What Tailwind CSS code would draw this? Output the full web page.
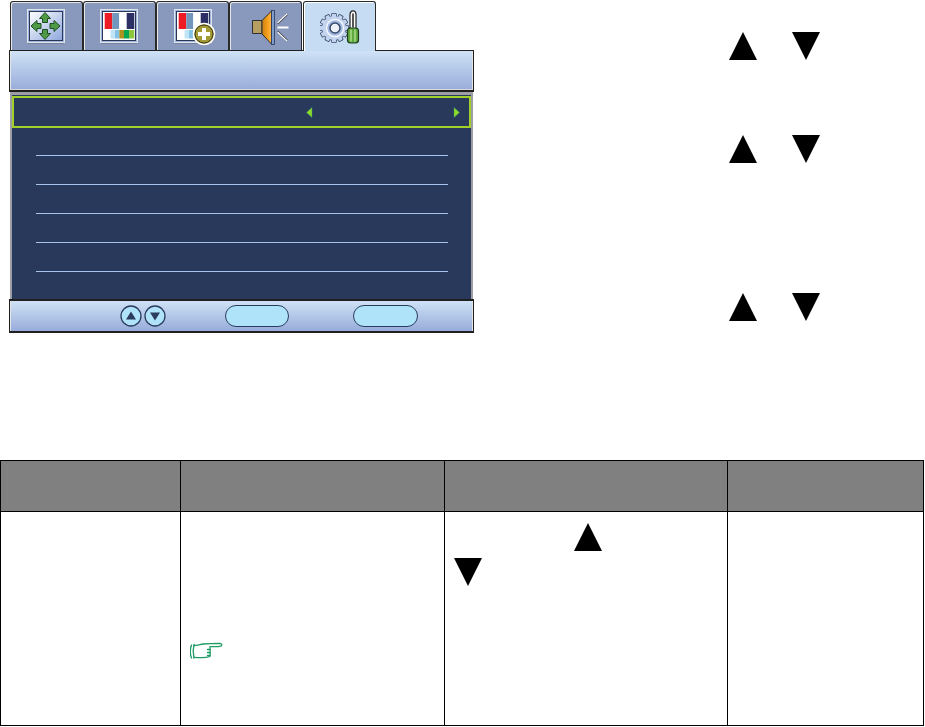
<!doctype html>
<html>
<head>
<meta charset="utf-8">
<script src="https://cdn.jsdelivr.net/npm/@tailwindcss/browser@4"></script>
</head>
<body class="bg-white">
<svg width="0" height="0" class="absolute">
  <defs>
    <linearGradient id="scr" x1="0" y1="0" x2="1" y2="1"><stop offset="0" stop-color="#ffffff"/><stop offset="1" stop-color="#8ea6dc"/></linearGradient>
    <linearGradient id="cone" x1="0" y1="0" x2="1" y2="0"><stop offset="0" stop-color="#c4821a"/><stop offset=".5" stop-color="#f39a16"/><stop offset="1" stop-color="#ffb84a"/></linearGradient>
    <rect id="toothd" x="11.300" y="3" width="5.400" height="6" rx="1" fill="#3a4a68"/>
    <rect id="toothl" x="12" y="3.800" width="4" height="6" rx=".6" fill="#c2d4f0"/>
  </defs>
</svg>
<div class="w-[925px] h-[727px] overflow-hidden flex flex-col">
  <div class="flex h-[460px]">
    <!-- OSD -->
    <div class="ml-[9px] w-[465px] h-[333px] flex flex-col">
      <div class="flex h-[50px] pt-px pl-px">
        <div class="w-[73px] h-[49px] rounded-t-[3px] border border-b-0 border-[#2a2a2a] bg-[#8899bd] shadow-[inset_1px_1px_0_#e8e8e8] pl-[16px] pt-[7px]">
          <svg width="38" height="36" viewBox="0 0 38 36">
            <rect x="0.500" y="0.500" width="37" height="33" fill="#9fb6de" stroke="#dfe3ea"/>
            <rect x="1" y="34" width="36" height="1" fill="#77829c"/>
            <rect x="2.500" y="2.500" width="33" height="29" fill="url(#scr)" stroke="#2b3555"/>
            <g fill="#4f9b45" stroke="#1d4d22" stroke-width="1" stroke-linejoin="round">
              <path d="M18 3.500l5.500 6h-3v4h-5v-4h-3z"/>
              <path d="M18 30.500l5.500-6h-3v-4h-5v4h-3z"/>
              <path d="M4 17l6-5.500v3h4v5h-4v3z"/>
              <path d="M33 17l-6-5.500v3h-4v5h4v3z"/>
            </g>
          </svg>
        </div>
        <div class="w-[73px] h-[49px] rounded-t-[3px] border border-b-0 border-[#2a2a2a] bg-[#8899bd] shadow-[inset_1px_1px_0_#e8e8e8] pl-[16px] pt-[7px]">
          <svg width="38" height="36" viewBox="0 0 38 36">
            <rect x="0.500" y="0.500" width="37" height="33" fill="#9fb6de" stroke="#dfe3ea"/>
            <rect x="1" y="34" width="36" height="1" fill="#77829c"/>
            <rect x="2.500" y="2.500" width="33" height="29" fill="#fff" stroke="#2b3555"/>
            <rect x="4.700" y="4" width="7.600" height="16" fill="#ed1c24"/>
            <rect x="12.300" y="4" width="7" height="16" fill="#7396bd"/>
            <rect x="19.300" y="4" width="7.400" height="16" fill="#fff"/>
            <rect x="26.700" y="4" width="7.600" height="16" fill="#2b2f66"/>
            <rect x="4.700" y="21" width="6" height="8.500" fill="#fff"/>
            <rect x="10.600" y="21" width="4.400" height="8.500" fill="#bfe4f5"/>
            <rect x="15" y="21" width="4.300" height="8.500" fill="#85c2e6"/>
            <rect x="19.300" y="21" width="4.700" height="8.500" fill="#ab931f"/>
            <rect x="24" y="21" width="5" height="8.500" fill="#00a651"/>
            <rect x="29" y="21" width="5.300" height="8.500" fill="#8dc63f"/>
          </svg>
        </div>
        <div class="w-[73px] h-[49px] rounded-t-[3px] border border-b-0 border-[#2a2a2a] bg-[#8899bd] shadow-[inset_1px_1px_0_#e8e8e8] pl-[17px] pt-[7px]">
          <svg width="42" height="38" viewBox="0 0 42 38">
            <rect x="0.500" y="0.500" width="37" height="33" fill="#9fb6de" stroke="#dfe3ea"/>
            <rect x="1" y="34" width="36" height="1" fill="#77829c"/>
            <rect x="2.500" y="2.500" width="33" height="29" fill="#fff" stroke="#2b3555"/>
            <rect x="4.700" y="4" width="7.600" height="16" fill="#ed1c24"/>
            <rect x="12.300" y="4" width="7" height="16" fill="#7396bd"/>
            <rect x="19.300" y="4" width="7.400" height="16" fill="#fff"/>
            <rect x="26.700" y="4" width="7.600" height="16" fill="#2b2f66"/>
            <rect x="4.700" y="21" width="6" height="8.500" fill="#fff"/>
            <rect x="10.600" y="21" width="4.400" height="8.500" fill="#bfe4f5"/>
            <rect x="15" y="21" width="4.300" height="8.500" fill="#85c2e6"/>
            <circle cx="30" cy="25" r="10.500" fill="#a39a35" stroke="#fff" stroke-width="1.500"/>
            <circle cx="30" cy="25" r="9" fill="none" stroke="#3a3a1e"/>
            <path d="M28 19h4v4h4v4h-4v4h-4v-4h-4v-4h4z" fill="#fff"/>
          </svg>
        </div>
        <div class="w-[73px] h-[49px] rounded-t-[3px] border border-b-0 border-[#2a2a2a] bg-[#8899bd] shadow-[inset_1px_1px_0_#e8e8e8] pl-[22px] pt-[8px]">
          <svg width="38" height="36" viewBox="0 0 38 36">
            <path d="M0.500 10.500h9.500v13h-9.500z" fill="#b59f63" stroke="#2f2f2f"/>
            <path d="M10 10.500l9.500-9.500v33l-9.500-10z" fill="url(#cone)" stroke="#2f2f2f"/>
            <rect x="19.500" y="0.500" width="3" height="34" fill="#7d9cc9" stroke="#2b3555" stroke-width=".8"/>
            <path d="M25.500 17.500h11" stroke="#fff" stroke-width="2"/>
            <path d="M25.500 13.500l9.500-9" stroke="#333" stroke-width="1.800"/>
            <path d="M25.500 21.500l9.500 9" stroke="#333" stroke-width="1.800"/>
            <path d="M25.500 13l9.500-9M25.500 22l9.500 9" stroke="#fff" stroke-width="1.200"/>
          </svg>
        </div>
        <div class="relative z-10 ml-px w-[73px] h-[50px] rounded-t-[3px] border border-b-0 border-[#2a2a2a] bg-[#c6dcf3] shadow-[inset_1px_1px_0_#fff] pl-[16px] pt-[8px]">
          <svg width="42" height="36" viewBox="0 0 42 36">
            <use href="#toothd"/>
            <use href="#toothd" transform="rotate(30 14 18)"/>
            <use href="#toothd" transform="rotate(60 14 18)"/>
            <use href="#toothd" transform="rotate(90 14 18)"/>
            <use href="#toothd" transform="rotate(120 14 18)"/>
            <use href="#toothd" transform="rotate(150 14 18)"/>
            <use href="#toothd" transform="rotate(180 14 18)"/>
            <use href="#toothd" transform="rotate(210 14 18)"/>
            <use href="#toothd" transform="rotate(240 14 18)"/>
            <use href="#toothd" transform="rotate(270 14 18)"/>
            <use href="#toothd" transform="rotate(300 14 18)"/>
            <use href="#toothd" transform="rotate(330 14 18)"/>
            <circle cx="14" cy="18" r="12.600" fill="#3a4a68"/>
            <use href="#toothl"/>
            <use href="#toothl" transform="rotate(30 14 18)"/>
            <use href="#toothl" transform="rotate(60 14 18)"/>
            <use href="#toothl" transform="rotate(90 14 18)"/>
            <use href="#toothl" transform="rotate(120 14 18)"/>
            <use href="#toothl" transform="rotate(150 14 18)"/>
            <use href="#toothl" transform="rotate(180 14 18)"/>
            <use href="#toothl" transform="rotate(210 14 18)"/>
            <use href="#toothl" transform="rotate(240 14 18)"/>
            <use href="#toothl" transform="rotate(270 14 18)"/>
            <use href="#toothl" transform="rotate(300 14 18)"/>
            <use href="#toothl" transform="rotate(330 14 18)"/>
            <circle cx="14" cy="18" r="11.900" fill="#c2d4f0"/>
            <circle cx="15" cy="18" r="8.500" fill="#9fb7e2" stroke="#f4f8fd" stroke-width="1.500"/>
            <circle cx="15" cy="18" r="5" fill="#eef3fb" stroke="#3a4a68" stroke-width="1.500"/>
            <path d="M33 0.800c2 0 3 2 3 4v13.700h-6V4.800c0-2 1-4 3-4z" fill="#fff" stroke="#222" stroke-width="1.200"/>
            <path d="M32 3.500h2v14h-2z" fill="#555"/>
            <rect x="27.500" y="18" width="11" height="15" rx="3" fill="#5da83f" stroke="#1f3d1c" stroke-width="1.200"/>
            <path d="M31 19.500v12M35 19.500v12" stroke="#b4e08a" stroke-width="1.400"/>
          </svg>
        </div>
      </div>
      <div class="h-[42px] border border-[#1f1f1f] border-b-2 bg-gradient-to-b from-[#cfe2f6] to-[#98acda] shadow-[inset_0_-1px_0_#d9d9d9,inset_1px_0_0_#e5e5e5,inset_-1px_0_0_#e5e5e5]"></div>
      <div class="h-[207px] mx-px bg-[#29395c] border-x-2 border-t-[3px] border-[#9c9ea3] pt-px flex flex-col">
        <div class="h-[32px] border-2 border-[#a2d02a] flex items-center justify-between pl-[292px] pr-[9px] shrink-0">
          <svg width="7" height="11" viewBox="0 0 7 11"><path d="M6 0.500v10L0.500 5.500z" fill="#8ed92a" stroke="#2f9a6a" stroke-width=".4"/></svg>
          <svg width="7" height="11" viewBox="0 0 7 11"><path d="M1 0.500v10L6.500 5.500z" fill="#8ed92a" stroke="#2f9a6a" stroke-width=".4"/></svg>
        </div>
        <div class="ml-[24px] mr-[23px] flex flex-col">
          <div class="h-[28px] border-b border-[#a8c4ec]"></div>
          <div class="h-[29px] border-b border-[#a8c4ec]"></div>
          <div class="h-[29px] border-b border-[#a8c4ec]"></div>
          <div class="h-[29px] border-b border-[#a8c4ec]"></div>
          <div class="h-[29px] border-b border-[#a8c4ec]"></div>
        </div>
      </div>
      <div class="h-[34px] border border-[#1f1f1f] border-t-2 border-b-2 bg-gradient-to-b from-[#cfe2f6] to-[#98acda] flex items-center shadow-[inset_1px_0_0_#e5e5e5,inset_-1px_0_0_#e5e5e5]">
        <div class="flex gap-[2px] ml-[110px]">
          <svg width="22" height="22" viewBox="0 0 22 22"><circle cx="11" cy="11" r="10" fill="#aee3fa" stroke="#2c3c5e" stroke-width="1.300"/><path d="M11 6.500l5 8H6z" fill="#2c3c5e"/></svg>
          <svg width="22" height="22" viewBox="0 0 22 22"><circle cx="11" cy="11" r="10" fill="#aee3fa" stroke="#2c3c5e" stroke-width="1.300"/><path d="M11 15.500l-5-8h10z" fill="#2c3c5e"/></svg>
        </div>
        <div class="ml-[59px] w-[64px] h-[22px] rounded-[11px] border border-[#2c3c5e] bg-[#aee3fa]"></div>
        <div class="ml-[64px] w-[65px] h-[22px] rounded-[11px] border border-[#2c3c5e] bg-[#aee3fa]"></div>
      </div>
    </div>
    <!-- Right column triangles -->
    <div class="ml-[255px] pt-[32px] flex flex-col">
      <div class="flex gap-[35px]">
        <svg width="28" height="28" viewBox="0 0 28 28"><path d="M14 0l14 28H0z" fill="#000"/></svg>
        <svg width="28" height="28" viewBox="0 0 28 28"><path d="M0 0h28L14 28z" fill="#000"/></svg>
      </div>
      <div class="flex gap-[35px] mt-[75px]">
        <svg width="28" height="28" viewBox="0 0 28 28"><path d="M14 0l14 28H0z" fill="#000"/></svg>
        <svg width="28" height="28" viewBox="0 0 28 28"><path d="M0 0h28L14 28z" fill="#000"/></svg>
      </div>
      <div class="flex gap-[35px] mt-[130px]">
        <svg width="28" height="28" viewBox="0 0 28 28"><path d="M14 0l14 28H0z" fill="#000"/></svg>
        <svg width="28" height="28" viewBox="0 0 28 28"><path d="M0 0h28L14 28z" fill="#000"/></svg>
      </div>
    </div>
  </div>
  <!-- Table -->
  <div class="w-[924px] h-[266px] border-t-[1.5px] border-b-[1.5px] border-black grid grid-cols-[181px_264px_283px_196px] grid-rows-[51px_1fr]">
    <div class="bg-[#808080] border-l-[1.5px] border-r-[1.5px] border-b-[1.5px] border-black"></div>
    <div class="bg-[#808080] border-r-[1.5px] border-b-[1.5px] border-black"></div>
    <div class="bg-[#808080] border-r-[1.5px] border-b-[1.5px] border-black"></div>
    <div class="bg-[#808080] border-r-[1.5px] border-b-[1.5px] border-black"></div>
    <div class="border-l-[1.5px] border-r-[1.5px] border-black"></div>
    <div class="border-r-[1.5px] border-black pl-[9px] pt-[130px]">
      <svg width="34" height="18" viewBox="0 0 34 18" fill="none" stroke="#1e9a63" stroke-width="1.300" stroke-linejoin="round" stroke-linecap="round">
        <path d="M1.500 3c-1.500 4-1.500 9 0 13"/>
        <path d="M4 2.500c-1 4-1 9 0 13.500"/>
        <path d="M4 3.500c3 0 6-1 9-1.500 5-.5 11-.7 17-.7 2.500.3 2.500 2.800 0 3-3 .3-7 .2-10 .4 0 3 .5 6.500 0 9.800-4 1.500-11 1.300-16 .8"/>
        <path d="M17.500 7.500h2.500M17.500 10.500h2.500M17.500 13.500h2.500"/>
      </svg>
    </div>
    <div class="border-r-[1.5px] border-black relative">
      <svg width="28" height="28" viewBox="0 0 28 28" class="absolute left-[129px] top-[11px]"><path d="M14 0l14 28H0z" fill="#000"/></svg>
      <svg width="28" height="28" viewBox="0 0 28 28" class="absolute left-[9px] top-[46px]"><path d="M0 0h28L14 28z" fill="#000"/></svg>
    </div>
    <div class="border-r-[1.5px] border-black"></div>
  </div>
</div>
</body>
</html>
